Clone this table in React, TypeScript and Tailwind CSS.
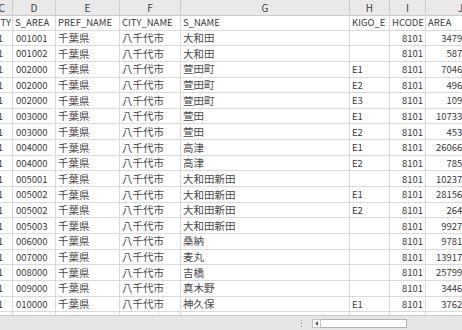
const FONT = { fontFamily: '"Noto Sans CJK JP", "Liberation Sans", sans-serif' };

const LETTERS = ["C", "D", "E", "F", "G", "H", "I", "J"];

type Row = [string, string, string, string, string, string, string];

const ROWS: Row[] = [
  ["001001", "千葉県", "八千代市", "大和田", "", "8101", "3479.5124"],
  ["001002", "千葉県", "八千代市", "大和田", "", "8101", "587.2931"],
  ["002000", "千葉県", "八千代市", "萱田町", "E1", "8101", "7046.1187"],
  ["002000", "千葉県", "八千代市", "萱田町", "E2", "8101", "496.7702"],
  ["002000", "千葉県", "八千代市", "萱田町", "E3", "8101", "109.4455"],
  ["003000", "千葉県", "八千代市", "萱田", "E1", "8101", "10733.6120"],
  ["003000", "千葉県", "八千代市", "萱田", "E2", "8101", "453.9080"],
  ["004000", "千葉県", "八千代市", "高津", "E1", "8101", "26066.1043"],
  ["004000", "千葉県", "八千代市", "高津", "E2", "8101", "785.3317"],
  ["005001", "千葉県", "八千代市", "大和田新田", "", "8101", "10237.5581"],
  ["005002", "千葉県", "八千代市", "大和田新田", "E1", "8101", "28156.0274"],
  ["005002", "千葉県", "八千代市", "大和田新田", "E2", "8101", "264.8810"],
  ["005003", "千葉県", "八千代市", "大和田新田", "", "8101", "9927.6403"],
  ["006000", "千葉県", "八千代市", "桑納", "", "8101", "9781.2256"],
  ["007000", "千葉県", "八千代市", "麦丸", "", "8101", "13917.3402"],
  ["008000", "千葉県", "八千代市", "吉橋", "", "8101", "25799.8133"],
  ["009000", "千葉県", "八千代市", "真木野", "", "8101", "3446.0592"],
  ["010000", "千葉県", "八千代市", "神久保", "E1", "8101", "3762.4478"],
  ["011000", "千葉県", "八千代市", "島田", "", "8101", "5120.9903"],
];

const GRID = "grid grid-cols-[13px_43px_64px_61px_169px_40px_36px_70px]";
const CELL =
  "flex items-center overflow-hidden whitespace-nowrap border-r border-b border-[#dadada]";
const LAT = `${CELL} text-[9.5px] text-[#3a3a3a]`;
const JP = `${CELL} text-[10.5px] text-[#4a4a4a] pl-[2px]`;

function DataRow({ row }: { row: Row }) {
  const [area, pref, city, name, kigo, hcode, size] = row;
  return (
    <div className={`${GRID} h-[15.65px]`}>
      <div className={`${LAT} justify-end pr-[9px]`}>1</div>
      <div className={`${LAT} pl-[3px]`}>{area}</div>
      <div className={JP}>{pref}</div>
      <div className={JP}>{city}</div>
      <div className={JP}>{name}</div>
      <div className={`${LAT} pl-[2px]`}>{kigo}</div>
      <div className={`${LAT} justify-end pr-[2px]`}>{hcode}</div>
      <div className={`${LAT} justify-end pr-[9px]`}>{size}</div>
    </div>
  );
}

export default function App() {
  return (
    <div className="flex h-[330px] w-[462px] flex-col overflow-hidden bg-white" style={FONT}>
      <div className="flex-1 overflow-hidden">
        <div className="w-[496px]">
          {/* column letters */}
          <div className={`${GRID} h-[15px] bg-[#e9e9e9]`}>
            {LETTERS.map((l, i) => (
              <div
                key={l}
                className={`flex items-center border-r border-b border-[#cdcdcd] text-[10px] text-[#444] ${
                  i === 0 ? "justify-end pr-[7px]" : "justify-center"
                }`}
              >
                {l}
              </div>
            ))}
          </div>

          {/* field names */}
          <div className={`${GRID} h-[15.65px]`}>
            <div className={`${LAT} justify-end pr-[1px]`}>TY</div>
            <div className={`${LAT} pl-[2px]`}>S_AREA</div>
            <div className={`${LAT} pl-[2px]`}>PREF_NAME</div>
            <div className={`${LAT} pl-[2px]`}>CITY_NAME</div>
            <div className={`${LAT} pl-[2px]`}>S_NAME</div>
            <div className={`${LAT} pl-[2px]`}>KIGO_E</div>
            <div className={`${LAT} pl-[2px]`}>HCODE</div>
            <div className={`${LAT} pl-[2px]`}>AREA</div>
          </div>

          {ROWS.map((r, i) => (
            <DataRow key={i} row={r} />
          ))}
        </div>
      </div>

      {/* sheet tab / scroll strip */}
      <div className="flex h-[15px] shrink-0 items-center border-t border-[#c8c8c8] bg-[#e6e6e6]">
        <div className="ml-[301px] flex flex-col gap-[2px]">
          <span className="block h-[1px] w-[1px] bg-[#8f8f8f]" />
          <span className="block h-[1px] w-[1px] bg-[#8f8f8f]" />
          <span className="block h-[1px] w-[1px] bg-[#8f8f8f]" />
        </div>
        <div className="ml-[10px] flex h-[9px] w-[9px] items-center justify-center border border-[#c2c2c2] bg-white">
          <svg width="3" height="5" viewBox="0 0 3 5">
            <path d="M3 0 L0 2.5 L3 5 Z" fill="#606060" />
          </svg>
        </div>
        <div className="h-[9px] w-[86px] border border-l-0 border-[#b5b5b5] bg-white" />
      </div>
    </div>
  );
}
